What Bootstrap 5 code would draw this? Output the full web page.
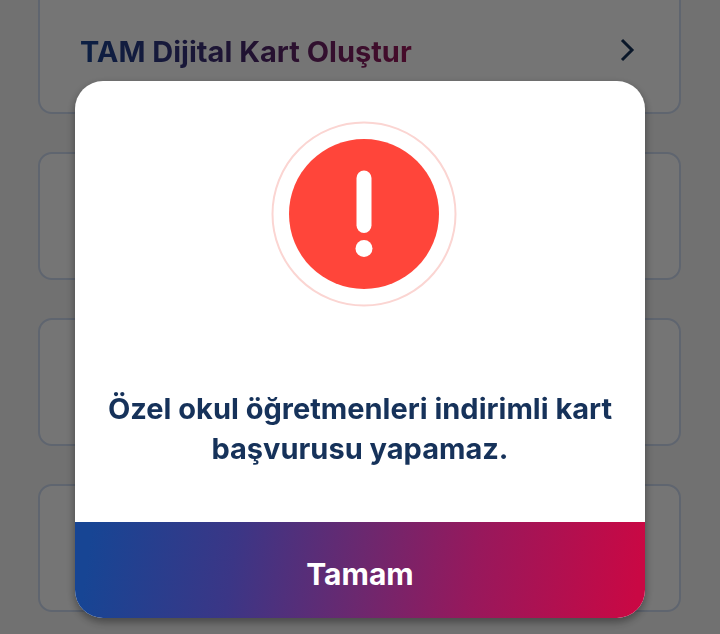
<!DOCTYPE html>
<html lang="tr">
<head>
<meta charset="utf-8">
<meta name="viewport" content="width=device-width, initial-scale=1">
<title>TAM Dijital Kart</title>
<link href="https://cdn.jsdelivr.net/npm/bootstrap@5.3.0/dist/css/bootstrap.min.css" rel="stylesheet">
<style>
  body { font-family: Inter, "Noto Sans", sans-serif; background: #f7f7f7; overflow: hidden; }
  .option-list { padding: 0 39px 0 38px; gap: 38px; }
  .option-card { --bs-card-border-color: #cfdcf2; --bs-card-border-width: 2px; --bs-card-border-radius: 14px; --bs-card-inner-border-radius: 12px; min-height: 128px; }
  .option-first { min-height: 114px; border-top: 0; border-top-left-radius: 0; border-top-right-radius: 0; padding: 32px 43px 0 40px; }
  .option-title { font-size: 29px; line-height: 40px; font-weight: 700; background: linear-gradient(90deg, #1a4594, #46296c 50%, #9c1a5c); -webkit-background-clip: text; background-clip: text; color: transparent; }
  .notice { background: rgba(0, 0, 0, .54); }
  .notice-dialog { max-width: none; margin: 81px 75px 16px; }
  .notice-content { --bs-modal-border-width: 0; --bs-modal-border-radius: 28px; overflow: hidden; box-shadow: 0 4px 10px rgba(0, 0, 0, .4); }
  .notice-body { padding: 40px 24px 53px; }
  .notice-icon { margin-left: 8px; margin-bottom: 82px; }
  .notice-text { font-size: 29px; line-height: 40px; font-weight: 700; color: #16325a; }
  .notice-action { --bs-btn-border-width: 0; --bs-btn-border-radius: 0; --bs-btn-font-size: 30px; --bs-btn-font-weight: 700; --bs-btn-color: #fff; --bs-btn-hover-color: #fff; line-height: 40px; padding: 32px 16px 24px; background: linear-gradient(98deg, #174594 3%, #3b3686 28%, #6b286f 50%, #98185c 70%, #c90844 98%); }
</style>
</head>
<body>
<main class="option-list d-flex flex-column">
  <a href="#" class="card option-card option-first flex-row justify-content-between align-items-start text-decoration-none">
    <span class="option-title">TAM Dijital Kart Oluştur</span>
    <svg width="16" height="36" viewBox="0 0 16 36" fill="none" stroke="#16325a" stroke-width="3" aria-hidden="true"><path d="M2 8 12 18 2 28"/></svg>
  </a>
  <div class="card option-card"></div>
  <div class="card option-card"></div>
  <div class="card option-card"></div>
</main>
<div class="modal d-block notice" role="dialog" aria-modal="true" aria-labelledby="notice-message">
  <div class="modal-dialog notice-dialog">
    <div class="modal-content notice-content">
      <div class="modal-body notice-body text-center">
        <svg class="notice-icon" width="186" height="186" viewBox="0 0 186 186" aria-hidden="true">
          <circle cx="93" cy="93" r="91.5" fill="none" stroke="#fbd5d2" stroke-width="2"/>
          <circle cx="93" cy="93" r="75" fill="#ff453a"/>
          <rect x="85.500" y="49.500" width="15" height="62.500" rx="7.500" fill="#fff"/>
          <circle cx="93" cy="127.500" r="8.500" fill="#fff"/>
        </svg>
        <p id="notice-message" class="notice-text mb-0">Özel okul öğretmenleri indirimli kart başvurusu yapamaz.</p>
      </div>
      <button type="button" class="btn notice-action w-100">Tamam</button>
    </div>
  </div>
</div>
<script src="https://cdn.jsdelivr.net/npm/bootstrap@5.3.0/dist/js/bootstrap.bundle.min.js"></script>
</body>
</html>
